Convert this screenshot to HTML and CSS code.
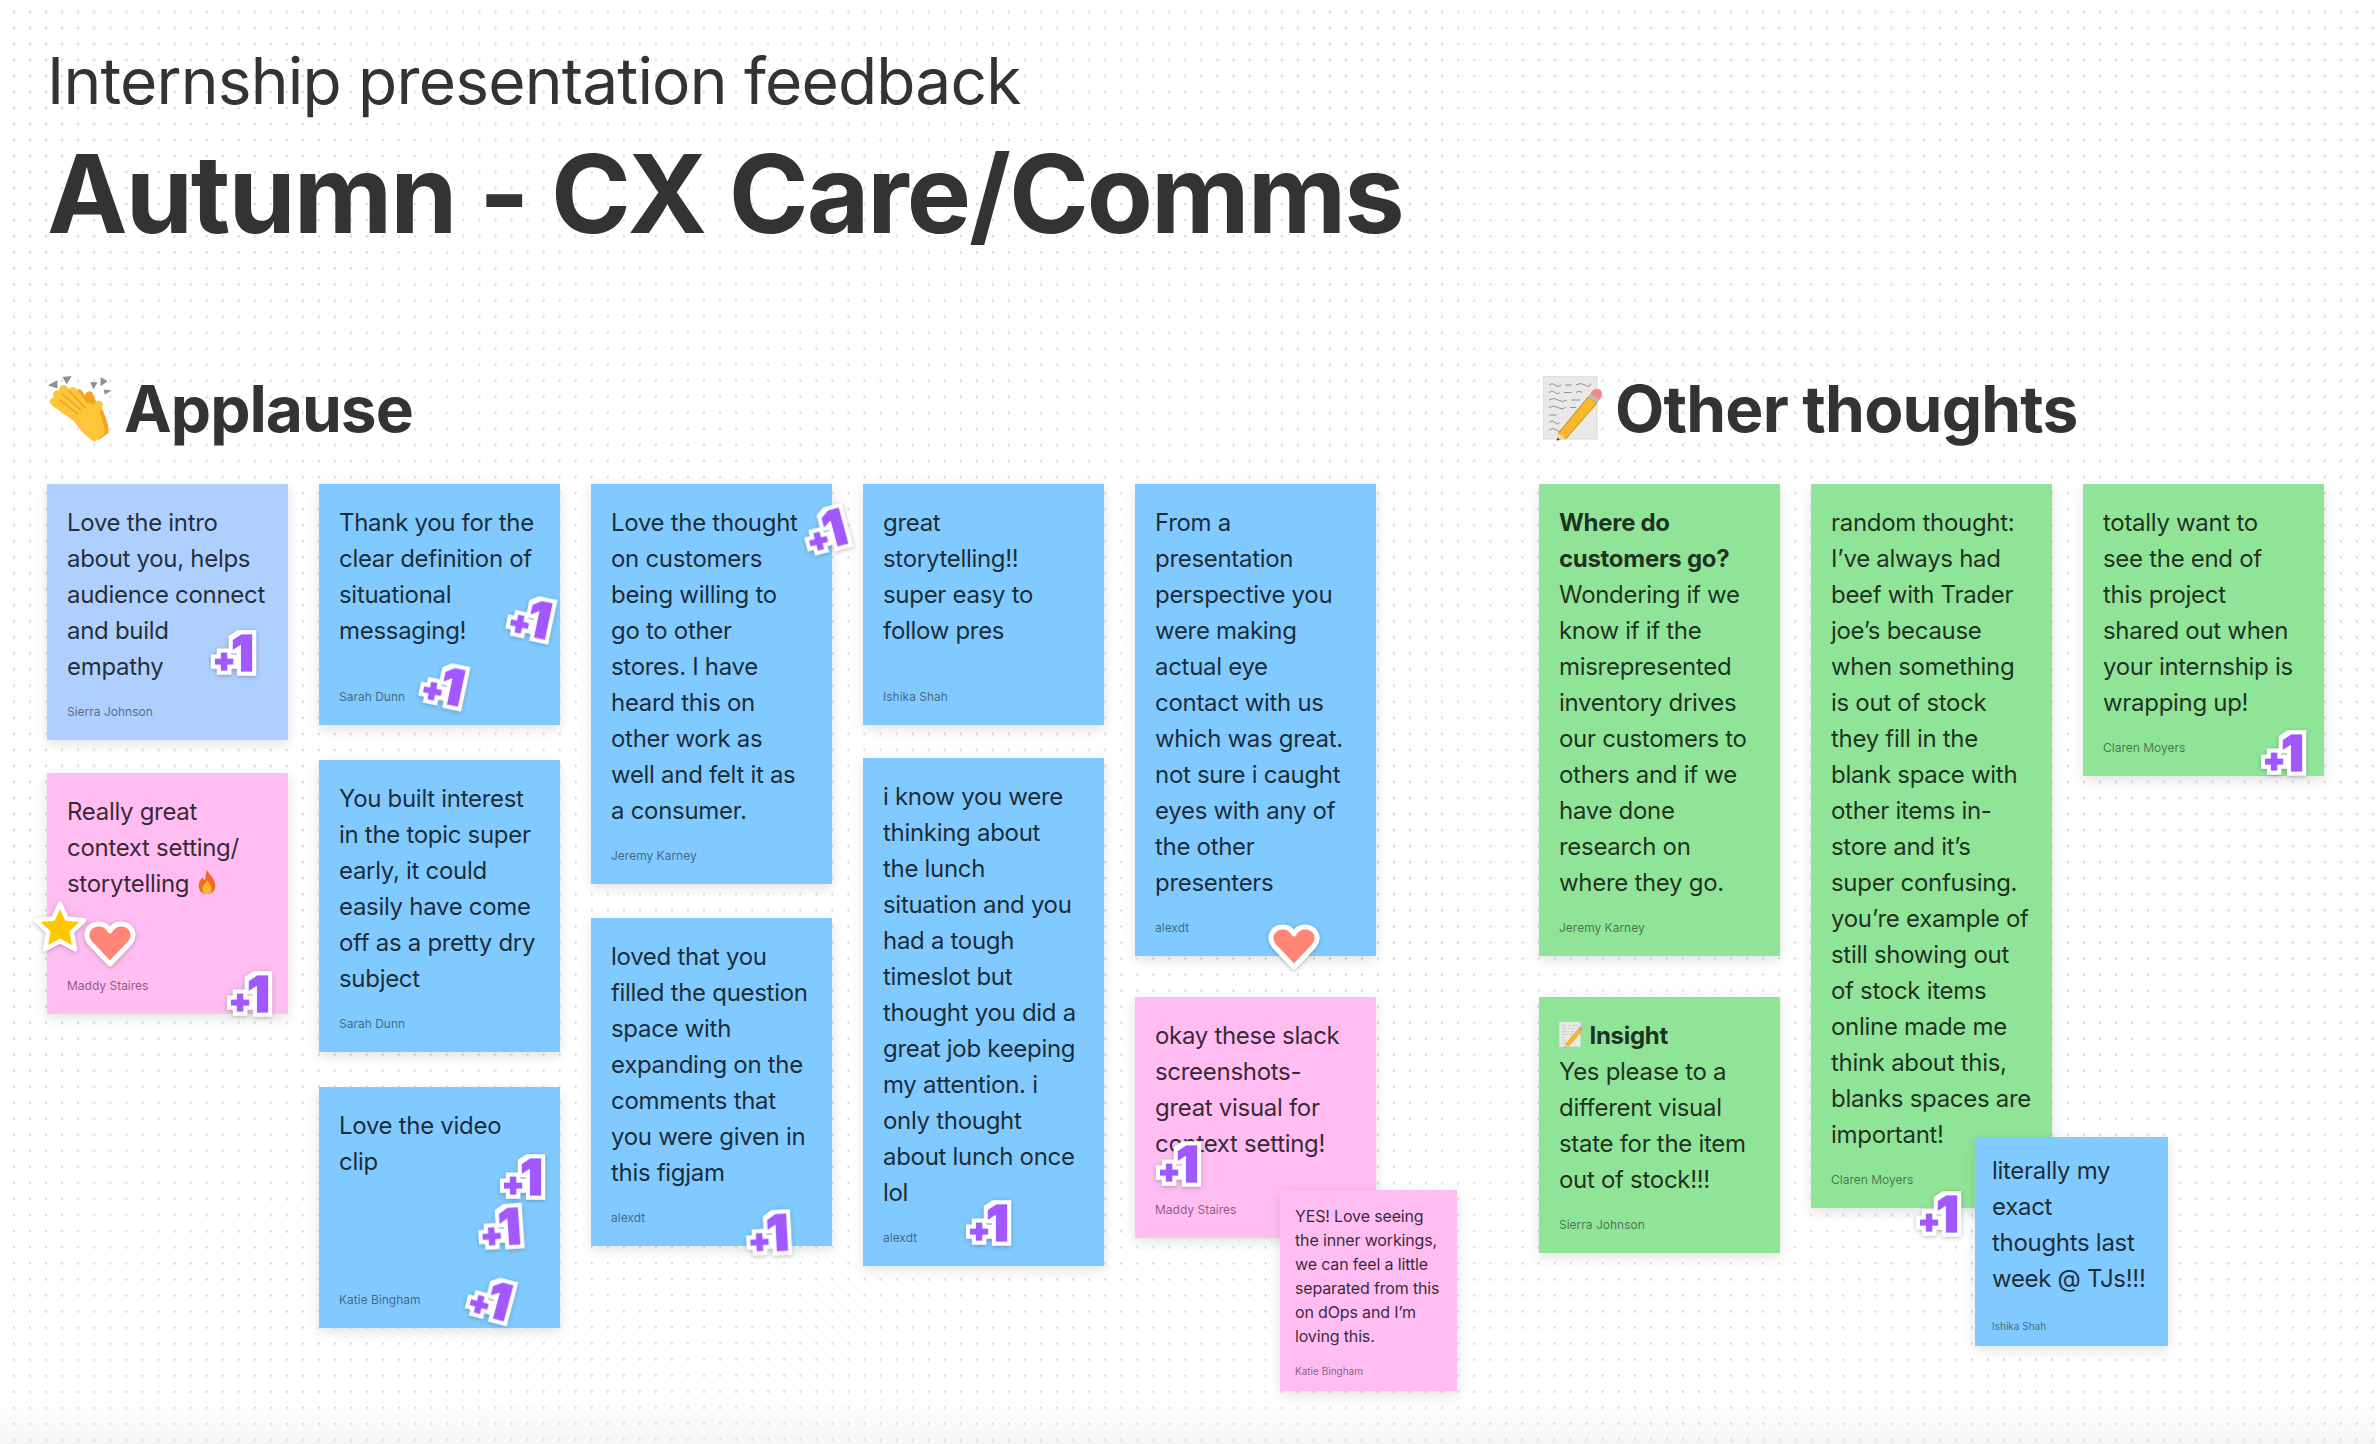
FILE: index.html
```html
<!DOCTYPE html>
<html lang="en">
<head>
  <meta charset="UTF-8">
  <meta name="viewport" content="width=device-width, initial-scale=1.0">
  <title>Internship presentation feedback</title>
  <link rel="stylesheet" href="styles.css">
</head>
<body>

<svg class="sprites" aria-hidden="true">
  <filter id="stamp-outline" x="-30%" y="-30%" width="160%" height="160%">
    <feMorphology in="SourceAlpha" operator="dilate" radius="4" result="fat"/>
    <feFlood flood-color="#fff"/>
    <feComposite in2="fat" operator="in" result="edge"/>
    <feMerge>
      <feMergeNode in="edge"/>
      <feMergeNode in="SourceGraphic"/>
    </feMerge>
  </filter>
  <symbol id="memo" viewBox="0 0 40 44">
    <rect x="0" y="0" width="36" height="42" fill="#e9e9e7" stroke="#d4d4d2" stroke-width=".6"/>
    <g stroke="#666" stroke-width=".45" fill="none">
      <path d="M4 6 q2 -2 4 0 t4 0 M15 6 h4 M22 6 q3 -2 6 0 t4 -1"/>
      <path d="M4 11 q2 -2 4 0 t3 0 M14 11 h5 M22 11 q2 -2 4 0"/>
      <path d="M4 16 q3 -2 6 0 t6 0 M19 16 h6"/>
      <path d="M4 21 q3 -2 6 0 t5 0 M18 21 h4"/>
      <path d="M4 26 h5"/>
      <path d="M4 31 q2 -2 4 0 t3 0"/>
      <path d="M4 36 q3 -2 5 0 t3 0"/>
    </g>
    <path d="M12 41 L10 38.500 L30 14 L36 18 L15 42 Z" fill="#f7b92b" stroke="#b9801a" stroke-width=".6"/>
    <path d="M10.500 38 L9 43 L15 42 Z" fill="#f3d6a8"/>
    <path d="M9.600 41 L9 43 L11.400 42.600 Z" fill="#444"/>
    <path d="M30 14 L36 18 L37.500 16 L31.500 12 Z" fill="#b9b9b9"/>
    <path d="M31.500 12 L37.500 16 Q41 12 38 9 Q34 7 31.500 12 Z" fill="#f08a8a"/>
  </symbol>
  <symbol id="star" viewBox="0 0 50 50">
    <path d="M25 4 L31 17.500 L46.500 19 L35.500 29.500 L38.500 45 L25 37.500 L11.500 45 L14.500 29.500 L3.500 19 L19 17.500 Z" fill="#ffc700" stroke="#fff" stroke-width="4" stroke-linejoin="round"/>
  </symbol>
  <symbol id="heart" viewBox="0 0 54 50">
    <path d="M27 45 L7 24 C0 15 6 5 16 5 C21 5 25 8 27 12 C29 8 33 5 38 5 C48 5 54 15 47 24 Z" fill="#ff8577" stroke="#fff" stroke-width="5" stroke-linejoin="round"/>
  </symbol>
</svg>

<main class="board">
  <header class="page-head">
    <p class="kicker">Internship presentation feedback</p>
    <h1 class="title">Autumn - CX Care/Comms</h1>
  </header>

  <div class="sections">
    <section class="group group-applause">
      <h2 class="group-title">
        <svg class="head-icon" viewBox="0 0 64 68" aria-hidden="true">
          <g fill="#8f8f8f">
            <path d="M1 11 L10 6 L10 14 Z"/><path d="M15 3 L24 2 L19 10 Z"/>
            <path d="M42 8 L49 8 L45 15 Z"/><path d="M52 3 L59 7 L52 12 Z"/><path d="M55 15 L63 16 L56 20 Z"/>
          </g>
          <g stroke="#f2a41e" stroke-width="8" stroke-linecap="round" fill="none">
            <path d="M46 44 L31 19"/><path d="M50 44 L41 21"/>
          </g>
          <path d="M38 36 L50 28 C55 36 60 48 60 57 L50 64 Z" fill="#f2a41e"/>
          <g stroke="#fdc53a" stroke-width="8.500" stroke-linecap="round" fill="none">
            <path d="M34 46 L7 27"/><path d="M37 42 L10 20"/><path d="M39 40 L16 15"/><path d="M41 38 L25 17"/><path d="M44 42 L50 30"/>
          </g>
          <path d="M20 36 L42 28 L50 34 C53 42 56 50 56 58 L46 66 C36 60 28 50 20 36 Z" fill="#fdc53a"/>
          <g stroke="#e79a1a" stroke-width="1" fill="none">
            <path d="M12 25 L30 39"/><path d="M14 19 L33 35"/><path d="M21 16 L37 33"/>
          </g>
        </svg>
        Applause
      </h2>
      <div class="columns">
        <div class="col col-a">
          <article class="sticky sticky-sky">
            <p class="note">Love the intro about you, helps audience connect and build empathy</p>
            <p class="author">Sierra Johnson</p>
          </article>
          <article class="sticky sticky-pink">
            <p class="note">Really great context setting/ storytelling
              <svg class="fire" viewBox="0 0 24 28" aria-hidden="true">
                <path d="M12 1 C14 6 21 10 21 18 C21 24 17 27 12 27 C7 27 3 24 3 18 C3 14 5 11 7 9 C8 11 9 12 10 12 C11 9 10 5 12 1 Z" fill="#f4671f"/>
                <path d="M12 12 C14 15 17 18 17 21 C17 25 15 27 12 27 C9 27 7 25 7 21 C7 18 10 16 12 12 Z" fill="#fdb52c"/>
              </svg>
            </p>
            <p class="author">Maddy Staires</p>
          </article>
        </div>

        <div class="col col-b">
          <article class="sticky sticky-blue">
            <p class="note">Thank you for the clear definition of situational messaging!</p>
            <p class="author">Sarah Dunn</p>
          </article>
          <article class="sticky sticky-blue">
            <p class="note">You built interest in the topic super early, it could easily have come off as a pretty dry subject</p>
            <p class="author">Sarah Dunn</p>
          </article>
          <article class="sticky sticky-blue">
            <p class="note">Love the video clip</p>
            <p class="author">Katie Bingham</p>
          </article>
        </div>

        <div class="col col-c">
          <article class="sticky sticky-blue">
            <p class="note">Love the thought on customers being willing to<br>go to other<br>stores. I have heard this on<br>other work as well and felt it as a consumer.</p>
            <p class="author">Jeremy Karney</p>
          </article>
          <article class="sticky sticky-blue">
            <p class="note">loved that you filled the question space with expanding on the comments that you were given in this figjam</p>
            <p class="author">alexdt</p>
          </article>
        </div>

        <div class="col col-d">
          <article class="sticky sticky-blue">
            <p class="note">great<br>storytelling!! super easy to follow pres</p>
            <p class="author">Ishika Shah</p>
          </article>
          <article class="sticky sticky-blue">
            <p class="note">i know you were thinking about<br>the lunch<br>situation and you had a tough timeslot but thought you did a great job keeping my attention. i only thought about lunch once lol</p>
            <p class="author">alexdt</p>
          </article>
        </div>

        <div class="col col-e">
          <article class="sticky sticky-blue">
            <p class="note">From a presentation perspective you were making actual eye contact with us which was great. not sure i caught eyes with any of the other presenters</p>
            <p class="author">alexdt</p>
          </article>
          <article class="sticky sticky-pink">
            <p class="note">okay these slack screenshots- great visual for context setting!</p>
            <p class="author">Maddy Staires</p>
          </article>
        </div>
      </div>
    </section>

    <section class="group group-other">
      <h2 class="group-title">
        <svg class="head-icon head-icon-memo" aria-hidden="true"><use href="#memo"/></svg>
        Other thoughts
      </h2>
      <div class="columns">
        <div class="col col-f">
          <article class="sticky sticky-green">
            <p class="note"><b>Where do customers go?</b> Wondering if we know if if the misrepresented inventory drives our customers to others and if we have done research on where they go.</p>
            <p class="author">Jeremy Karney</p>
          </article>
          <article class="sticky sticky-green">
            <p class="note"><svg class="inline-memo" aria-hidden="true"><use href="#memo"/></svg> <b>Insight</b><br>Yes please to a different visual state for the item out of stock!!!</p>
            <p class="author">Sierra Johnson</p>
          </article>
        </div>
        <div class="col">
          <article class="sticky sticky-green">
            <p class="note">random thought: I’ve always had beef with Trader joe’s because when something is out of stock they fill in the blank space with other items in-store and it’s super confusing. you’re example of still showing out of stock items online made me think about this, blanks spaces are important!</p>
            <p class="author">Claren Moyers</p>
          </article>
        </div>
        <div class="col">
          <article class="sticky sticky-green">
            <p class="note">totally want to see the end of this project shared out when your internship is wrapping up!</p>
            <p class="author">Claren Moyers</p>
          </article>
        </div>
      </div>
    </section>
  </div>

  <!-- notes dropped on top of other notes -->
  <article class="sticky sticky-pink reply-katie">
    <p class="note">YES! Love seeing the inner workings, we can feel a little separated from this on dOps and I’m loving this.</p>
    <p class="author">Katie Bingham</p>
  </article>
  <article class="sticky sticky-blue reply-ishika">
    <p class="note">literally my exact thoughts last week @ TJs!!!</p>
    <p class="author">Ishika Shah</p>
  </article>

  <!-- stickers -->
  <svg class="sticker stamp s1" viewBox="0 0 56 52"><text class="stamp-text" x="6" y="44" filter="url(#stamp-outline)"><tspan class="stamp-plus">+</tspan><tspan class="stamp-one" dx="-4">1</tspan></text></svg>
  <svg class="sticker stamp s2" viewBox="0 0 56 52"><text class="stamp-text" x="6" y="44" filter="url(#stamp-outline)"><tspan class="stamp-plus">+</tspan><tspan class="stamp-one" dx="-4">1</tspan></text></svg>
  <svg class="sticker stamp s3" viewBox="0 0 56 52"><text class="stamp-text" x="6" y="44" filter="url(#stamp-outline)"><tspan class="stamp-plus">+</tspan><tspan class="stamp-one" dx="-4">1</tspan></text></svg>
  <svg class="sticker stamp s4" viewBox="0 0 56 52"><text class="stamp-text" x="6" y="44" filter="url(#stamp-outline)"><tspan class="stamp-plus">+</tspan><tspan class="stamp-one" dx="-4">1</tspan></text></svg>
  <svg class="sticker stamp s5" viewBox="0 0 56 52"><text class="stamp-text" x="6" y="44" filter="url(#stamp-outline)"><tspan class="stamp-plus">+</tspan><tspan class="stamp-one" dx="-4">1</tspan></text></svg>
  <svg class="sticker stamp s6" viewBox="0 0 56 52"><text class="stamp-text" x="6" y="44" filter="url(#stamp-outline)"><tspan class="stamp-plus">+</tspan><tspan class="stamp-one" dx="-4">1</tspan></text></svg>
  <svg class="sticker stamp s7" viewBox="0 0 56 52"><text class="stamp-text" x="6" y="44" filter="url(#stamp-outline)"><tspan class="stamp-plus">+</tspan><tspan class="stamp-one" dx="-4">1</tspan></text></svg>
  <svg class="sticker stamp s8" viewBox="0 0 56 52"><text class="stamp-text" x="6" y="44" filter="url(#stamp-outline)"><tspan class="stamp-plus">+</tspan><tspan class="stamp-one" dx="-4">1</tspan></text></svg>
  <svg class="sticker stamp s9" viewBox="0 0 56 52"><text class="stamp-text" x="6" y="44" filter="url(#stamp-outline)"><tspan class="stamp-plus">+</tspan><tspan class="stamp-one" dx="-4">1</tspan></text></svg>
  <svg class="sticker stamp s10" viewBox="0 0 56 52"><text class="stamp-text" x="6" y="44" filter="url(#stamp-outline)"><tspan class="stamp-plus">+</tspan><tspan class="stamp-one" dx="-4">1</tspan></text></svg>
  <svg class="sticker stamp s11" viewBox="0 0 56 52"><text class="stamp-text" x="6" y="44" filter="url(#stamp-outline)"><tspan class="stamp-plus">+</tspan><tspan class="stamp-one" dx="-4">1</tspan></text></svg>
  <svg class="sticker stamp s12" viewBox="0 0 56 52"><text class="stamp-text" x="6" y="44" filter="url(#stamp-outline)"><tspan class="stamp-plus">+</tspan><tspan class="stamp-one" dx="-4">1</tspan></text></svg>
  <svg class="sticker stamp s13" viewBox="0 0 56 52"><text class="stamp-text" x="6" y="44" filter="url(#stamp-outline)"><tspan class="stamp-plus">+</tspan><tspan class="stamp-one" dx="-4">1</tspan></text></svg>
  <svg class="sticker star-sticker"><use href="#star"/></svg>
  <svg class="sticker heart-sticker h1"><use href="#heart"/></svg>
  <svg class="sticker heart-sticker h2"><use href="#heart"/></svg>
</main>

</body>
</html>
```

FILE: styles.css
```css
* { box-sizing: border-box; }
html, body { margin: 0; }
body { font-family: Inter, "Liberation Sans", sans-serif; color: #333; background: #fff; }
.sprites { width: 0; height: 0; position: absolute; }

.board {
  position: relative;
  width: 2376px; height: 1444px;
  overflow: hidden;
  padding: 38px 0 0 47px;
  background-image:
    radial-gradient(circle at 14px 11.7px, #dcdcdc 1px, transparent 1.5px),
    linear-gradient(to bottom, #fff calc(100% - 50px), #f6f6f6);
  background-size: 16.05px 16.05px, 100% 100%;
}

.kicker { margin: 0; font-size: 64px; line-height: 86px; font-weight: 400; letter-spacing: -.8px; color: #333; }
.title { margin: 9px 0 0; font-size: 108px; line-height: 122px; font-weight: 700; color: #333; letter-spacing: -2px; }

.sections { display: flex; gap: 163px; margin-top: 117px; }
.group-title {
  display: flex; align-items: center; gap: 11px;
  margin: 0 0 38px;
  height: 74px;
  font-size: 64px; line-height: 74px; font-weight: 700; letter-spacing: -1px; color: #333;
}
.group-other .group-title { letter-spacing: -.8px; padding-left: 4px; }
.head-icon { width: 66px; height: 70px; flex: none; }
.head-icon-memo { width: 60px; height: 66px; margin-right: 1px; }

.columns { display: flex; gap: 31px; }
.col { display: flex; flex-direction: column; gap: 34px; width: 241px; }
.col-a { gap: 33px; }
.col-b { gap: 35px; }
.col-c { gap: 34px; }
.col-d { gap: 33px; }
.col-e { gap: 41px; }
.col-f { gap: 41px; }

.sticky {
  display: flex; flex-direction: column;
  min-height: 241px;
  padding: 21px 20px 20px;
  box-shadow: 0 4px 12px rgba(0, 0, 0, .12);
}
.sticky-sky { background: #afcfff; }
.sticky-blue { background: #80caff; }
.sticky-pink { background: #ffbdf2; }
.sticky-green { background: #90e498; }

.note { margin: 0; font-size: 24px; line-height: 36px; letter-spacing: -.3px; color: rgba(0, 0, 0, .8); }
.note b { font-weight: 700; }
.author { margin: auto 0 0; padding-top: 19px; font-size: 12px; line-height: 16px; color: rgba(0, 0, 0, .5); }

.fire { width: 22px; height: 26px; vertical-align: -3px; }
.inline-memo { width: 24px; height: 26px; vertical-align: -4px; }

/* small replies sitting over the columns */
.reply-katie, .reply-ishika { position: absolute; z-index: 2; }
.reply-katie { left: 1280px; top: 1190px; width: 177px; min-height: 201px; padding: 14px 8px 14px 15px; }
.reply-katie .note { font-size: 16px; line-height: 24px; letter-spacing: -.15px; }
.reply-katie .author { font-size: 10px; line-height: 12px; padding-top: 14px; }
.reply-ishika { left: 1975px; top: 1137px; width: 193px; min-height: 209px; padding: 16px 14px 14px 17px; }
.reply-ishika .author { font-size: 10px; line-height: 12px; padding-top: 14px; }

.sticker { position: absolute; z-index: 3; overflow: visible; }
.star-sticker, .heart-sticker, .stamp { filter: drop-shadow(0 1px 2px rgba(0, 0, 0, .25)); }
.stamp { width: 56px; height: 52px; }
.stamp-text { font-family: Inter, sans-serif; font-weight: 900; fill: #a259ff; stroke: #a259ff; stroke-width: 1.5px; }
.stamp-plus { font-size: 32px; }
.stamp-one { font-size: 50px; }

.s1 { left: 207px; top: 627px; }
.s2 { left: 504px; top: 592px; transform: rotate(12deg); }
.s3 { left: 417px; top: 659px; transform: rotate(12deg); }
.s4 { left: 799px; top: 504px; transform: rotate(-15deg); }
.s5 { left: 223px; top: 968px; }
.s6 { left: 496px; top: 1151px; }
.s7 { left: 474px; top: 1201px; transform: rotate(-4deg); }
.s8 { left: 464px; top: 1273px; transform: rotate(15deg); }
.s9 { left: 742px; top: 1207px; transform: rotate(-3deg); }
.s10 { left: 962px; top: 1197px; }
.s11 { left: 1152px; top: 1138px; }
.s12 { left: 1912px; top: 1188px; }
.s13 { left: 2257px; top: 727px; }

.star-sticker { left: 32px; top: 899px; width: 56px; height: 56px; }
.heart-sticker { width: 54px; height: 50px; }
.h1 { left: 83px; top: 919px; }
.h2 { left: 1267px; top: 922px; }
```
